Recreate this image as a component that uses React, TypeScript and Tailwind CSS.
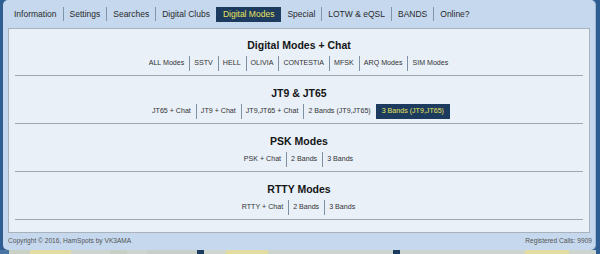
import React from 'react';

const tabs = ['Information', 'Settings', 'Searches', 'Digital Clubs', 'Digital Modes', 'Special', 'LOTW & eQSL', 'BANDS', 'Online?'];
const activeTab = 'Digital Modes';

const sections = [
    { title: 'Digital Modes + Chat', links: ['ALL Modes', 'SSTV', 'HELL', 'OLIVIA', 'CONTESTIA', 'MFSK', 'ARQ Modes', 'SIM Modes'], active: '' },
    { title: 'JT9 & JT65', links: ['JT65 + Chat', 'JT9 + Chat', 'JT9,JT65 + Chat', '2 Bands (JT9,JT65)', '3 Bands (JT9,JT65)'], active: '3 Bands (JT9,JT65)' },
    { title: 'PSK Modes', links: ['PSK + Chat', '2 Bands', '3 Bands'], active: '' },
    { title: 'RTTY Modes', links: ['RTTY + Chat', '2 Bands', '3 Bands'], active: '' },
];

// page behind the dialog peeks out along the bottom edge
const strip = [
    { w: 9, c: '#4a74a2' }, { w: 21, c: '#c9d1c4' }, { w: 41, c: '#e3dca2' }, { w: 39, c: '#cdd4cd' },
    { w: 17, c: '#c6cec6' }, { w: 20, c: '#cdd4cd' }, { w: 50, c: '#c8cfc8' }, { w: 7, c: '#1c3b5f' },
    { w: 22, c: '#cfd6d0' }, { w: 42, c: '#e3dca2' }, { w: 125, c: '#cdd4cd' }, { w: 7, c: '#1c3b5f' },
    { w: 125, c: '#cdd4cd' }, { w: 44, c: '#e3dca2' }, { w: 27, c: '#cdd4cd' }, { w: 4, c: '#2e5e92' },
];

export default function App() {
    return (
        <div className="w-[600px] h-[254px] bg-[#2e5e92] flex flex-col overflow-hidden font-['Liberation_Sans',Arial,sans-serif]">
            {/* Dialog */}
            <div className="ml-[3px] w-[593px] h-[250px] bg-[#c5d8ee] rounded-[5px] border-r border-[#9fb8d4] flex flex-col">
                {/* Tabs */}
                <div className="h-[28px] pl-[5px] flex items-center">
                    {tabs.map((t, i) => {
                        const isActive = t === activeTab;
                        const prevActive = i > 0 && tabs[i - 1] === activeTab;
                        if (isActive) {
                            return (
                                <div key={t} className="h-[15px] px-[7px] flex items-center bg-[#1c3b5f] text-[#e8e35c] text-[8.5px] leading-none">
                                    {t}
                                </div>
                            );
                        }
                        return (
                            <div
                                key={t}
                                className={`h-[14px] pl-[6px] pr-[6px] flex items-center text-[8.5px] leading-none text-[#2a2a2a] ${i > 0 && !prevActive ? 'border-l border-[#8595a9]' : ''}`}
                            >
                                {t}
                            </div>
                        );
                    })}
                </div>

                {/* Content panel */}
                <div className="ml-[5px] w-[582px] h-[205px] bg-[#e9f0f8] border border-[#a9b1ba] pt-[9px] flex flex-col">
                    {sections.map((s, si) => (
                        <div key={s.title} className={si > 0 ? 'pt-[10px]' : ''}>
                            <div className="h-[14px] flex items-center justify-center text-[10.5px] font-bold text-[#151515] leading-none">
                                {s.title}
                            </div>
                            <div className="mt-[4px] h-[15px] flex justify-center">
                                {s.links.map((l, li) => {
                                    const isActive = l === s.active;
                                    if (isActive) {
                                        return (
                                            <div key={l} className="h-[15px] px-[6px] flex items-center bg-[#1c3b5f] text-[#e8e35c] text-[7.1px] leading-none">
                                                {l}
                                            </div>
                                        );
                                    }
                                    return (
                                        <div
                                            key={l}
                                            className={`h-[15px] pl-[4px] pr-[5px] flex items-center text-[7.1px] leading-none text-[#333] ${li > 0 ? 'border-l border-[#7f8fa4]' : ''}`}
                                        >
                                            {l}
                                        </div>
                                    );
                                })}
                            </div>
                            <div className="mt-[4px] mx-[6px] h-px bg-[#9ea6ae]"></div>
                        </div>
                    ))}
                </div>

                {/* Footer */}
                <div className="flex-1 pl-[5px] pr-[3px] flex items-center justify-between text-[6.6px] text-[#555] leading-none">
                    <span>Copyright © 2016, HamSpots by VK3AMA</span>
                    <span>Registered Calls: 9909</span>
                </div>
            </div>

            <div className="flex h-[4px]">
                {strip.map((s, i) => (
                    <div key={i} className="h-full shrink-0" style={{ width: s.w, backgroundColor: s.c }}></div>
                ))}
            </div>
        </div>
    );
}
